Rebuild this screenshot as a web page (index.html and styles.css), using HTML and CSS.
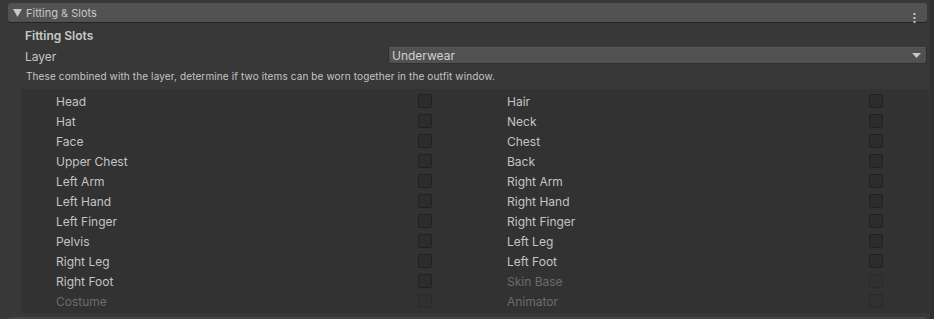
FILE: index.html
```html
<!DOCTYPE html>
<html>
<head>
<meta charset="utf-8">
<link rel="stylesheet" href="styles.css">
</head>
<body>
<div class="page">
  <div class="header">
    <svg class="fold" width="9" height="8" viewBox="0 0 9 8"><path d="M0 0H9L4.5 8Z" fill="#c8c8c8"/></svg>
    <span class="title">Fitting &amp; Slots</span>
    <svg class="kebab" width="3" height="11" viewBox="0 0 3 11"><rect x="0.5" y="0" width="2" height="2" fill="#c4c4c4"/><rect x="0.5" y="4" width="2" height="2" fill="#c4c4c4"/><rect x="0.5" y="8" width="2" height="2" fill="#c4c4c4"/></svg>
  </div>
  <div class="section">
    <div class="sec-title">Fitting Slots</div>
    <div class="field">
      <span class="field-label">Layer</span>
      <div class="dropdown">
        <span>Underwear</span>
        <svg width="9" height="5" viewBox="0 0 9 5"><path d="M0 0H9L4.5 5Z" fill="#c8c8c8"/></svg>
      </div>
    </div>
    <div class="help">These combined with the layer, determine if two items can be worn together in the outfit window.</div>
  </div>
  <div class="box">
    <div class="slot"><span>Head</span><i class="cb"></i></div>
    <div class="slot"><span>Hair</span><i class="cb"></i></div>
    <div class="slot"><span>Hat</span><i class="cb"></i></div>
    <div class="slot"><span>Neck</span><i class="cb"></i></div>
    <div class="slot"><span>Face</span><i class="cb"></i></div>
    <div class="slot"><span>Chest</span><i class="cb"></i></div>
    <div class="slot"><span>Upper Chest</span><i class="cb"></i></div>
    <div class="slot"><span>Back</span><i class="cb"></i></div>
    <div class="slot"><span>Left Arm</span><i class="cb"></i></div>
    <div class="slot"><span>Right Arm</span><i class="cb"></i></div>
    <div class="slot"><span>Left Hand</span><i class="cb"></i></div>
    <div class="slot"><span>Right Hand</span><i class="cb"></i></div>
    <div class="slot"><span>Left Finger</span><i class="cb"></i></div>
    <div class="slot"><span>Right Finger</span><i class="cb"></i></div>
    <div class="slot"><span>Pelvis</span><i class="cb"></i></div>
    <div class="slot"><span>Left Leg</span><i class="cb"></i></div>
    <div class="slot"><span>Right Leg</span><i class="cb"></i></div>
    <div class="slot"><span>Left Foot</span><i class="cb"></i></div>
    <div class="slot"><span>Right Foot</span><i class="cb"></i></div>
    <div class="slot disabled"><span>Skin Base</span><i class="cb"></i></div>
    <div class="slot disabled"><span>Costume</span><i class="cb"></i></div>
    <div class="slot disabled"><span>Animator</span><i class="cb"></i></div>
  </div>
  <div class="next-header"></div>
</div>
</body>
</html>
```
FILE: styles.css
```css
* { box-sizing: border-box; }
html, body {
  margin: 0;
  padding: 0;
  background: #383838;
  width: 934px;
  height: 319px;
  overflow: hidden;
}
body {
  font-family: Inter, "Noto Sans", sans-serif;
  color: #c4c4c4;
  font-size: 12px;
}
.page {
  width: 934px;
  height: 319px;
  padding-top: 3px;
  border-right: 4px solid #2f2f2f;
}
.header {
  margin: 0 3px 0 8px;
  height: 19px;
  background: #525252;
  border-radius: 3px;
  box-shadow: 0 1px 0 #232323;
  display: flex;
  align-items: center;
  padding-left: 5px;
  padding-right: 11px;
}
.fold { display: block; margin-right: 4px; }
.title { font-size: 11px; color: #c8c8c8; flex: 1; }
.kebab { display: block; margin-top: 11px; }
.section {
  padding: 4px 3px 0 25px;
}
.sec-title {
  font-weight: 600;
  height: 20px;
  line-height: 20px;
  font-size: 12px;
  color: #c8c8c8;
}
.field {
  display: flex;
  height: 20px;
  align-items: center;
}
.field-label { width: 363px; }
.dropdown {
  flex: 1;
  height: 17px;
  margin-top: -1px;
  background: #515151;
  border: 1px solid #303030;
  border-top-color: #585858;
  border-radius: 3px;
  display: flex;
  align-items: center;
  justify-content: space-between;
  padding: 0 5px 0 3px;
  color: #d2d2d2;
}
.dropdown svg { display: block; }
.help {
  height: 20px;
  line-height: 20px;
  font-size: 10px;
  letter-spacing: 0.12px;
  padding-left: 1px;
  color: #c4c4c4;
}
.box {
  margin: 3px 0 0 22px;
  width: 907px;
  background: #323232;
  padding: 2px 0;
  display: grid;
  grid-template-columns: 451px 451px;
}
.slot {
  height: 20px;
  display: flex;
  align-items: center;
  padding-left: 34px;
}
.slot span { width: 362px; }
.cb {
  display: block;
  width: 14px;
  height: 14px;
  background: #2c2c2c;
  border: 1px solid #212121;
  border-radius: 2px;
}
.slot.disabled span { color: #6c6c6c; }
.slot.disabled .cb { background: #303030; border-color: #2a2a2a; }
.next-header {
  margin: 4px 3px 0 8px;
  height: 10px;
  background: #464646;
  border-radius: 3px 3px 0 0;
}
```
